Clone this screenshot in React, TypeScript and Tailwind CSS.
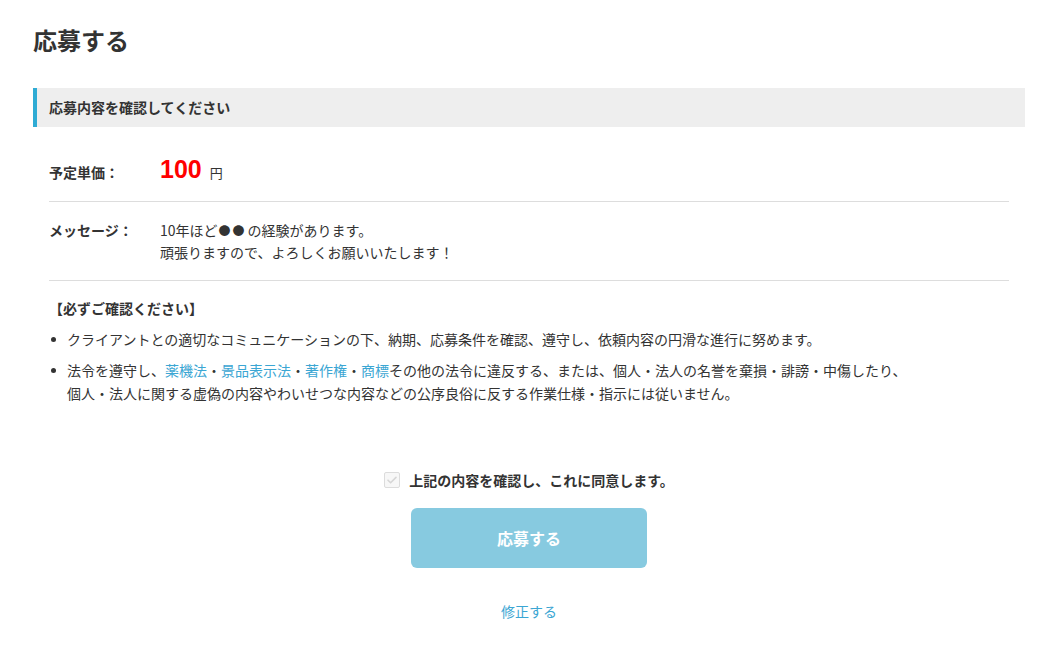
import React from 'react';

const font = { fontFamily: '"Noto Sans CJK JP", "Liberation Sans", sans-serif' };
const numFont = { fontFamily: '"Liberation Sans", Arial, sans-serif' };

const Link = ({ children }: { children: React.ReactNode }) => (
  <a href="#" className="text-[#3ba6d3]">{children}</a>
);

const Bullet = () => (
  <span className="w-[18px] shrink-0 flex justify-start pl-[2px] pt-[9px]">
    <span className="w-[5px] h-[5px] rounded-full bg-[#333]" />
  </span>
);

export default function App() {
  return (
    <div className="bg-white text-[#333] min-h-[663px]" style={font}>
      <div className="ml-[33px] w-[992px] pt-[24px]">
        <h1 className="text-[24px] font-bold leading-[32px]">応募する</h1>

        {/* Section header */}
        <div className="mt-[32px] h-[39px] bg-[#eeeeee] border-l-4 border-[#2fabd4] flex items-center pl-3">
          <h2 className="text-[14px] font-bold">応募内容を確認してください</h2>
        </div>

        <div className="px-4">
          {/* Price */}
          <div className="mt-4 py-[17px] flex items-center border-b border-[#dddddd]">
            <div className="w-[111px] text-[14px] font-bold">予定単価：</div>
            <div className="flex items-baseline gap-[8px] h-6 leading-6">
              <span className="text-[25px] font-bold text-[#ff0000] -mt-[3px]" style={numFont}>100</span>
              <span className="text-[13px]">円</span>
            </div>
          </div>

          {/* Message */}
          <div className="py-[17px] flex border-b border-[#dddddd]">
            <div className="w-[111px] text-[14px] font-bold leading-[22px]">メッセージ：</div>
            <p className="text-[14px] leading-[22px]">
              10年ほど<span className="text-[12px] leading-none tracking-[2px] px-[1px]">●●</span>の経験があります。
              <br />
              頑張りますので、よろしくお願いいたします！
            </p>
          </div>

          {/* Notes */}
          <div className="pt-4">
            <p className="text-[14px] font-bold leading-[22px]">【必ずご確認ください】</p>
            <ul className="mt-[9px] flex flex-col gap-2 text-[14px] leading-[23px]">
              <li className="flex">
                <Bullet />
                <span>クライアントとの適切なコミュニケーションの下、納期、応募条件を確認、遵守し、依頼内容の円滑な進行に努めます。</span>
              </li>
              <li className="flex">
                <Bullet />
                <span>
                  法令を遵守し、<Link>薬機法</Link>・<Link>景品表示法</Link>・<Link>著作権</Link>・<Link>商標</Link>その他の法令に違反する、または、個人・法人の名誉を棄損・誹謗・中傷したり、
                  <br />
                  個人・法人に関する虚偽の内容やわいせつな内容などの公序良俗に反する作業仕様・指示には従いません。
                </span>
              </li>
            </ul>
          </div>
        </div>

        {/* Agreement */}
        <div className="mt-[63px] flex flex-col items-center">
          <label className="flex items-center gap-[9px] h-6">
            <span className="w-4 h-4 border border-[#dcdcdc] rounded-[2px] bg-[#f7f7f7] flex items-center justify-center">
              <svg width="12" height="12" viewBox="0 0 12 12" fill="none">
                <path d="M2 6.2l2.6 2.6L10 3.4" stroke="#d6d6d6" strokeWidth="1.6" strokeLinecap="round" strokeLinejoin="round" />
              </svg>
            </span>
            <span className="text-[14px] font-bold">上記の内容を確認し、これに同意します。</span>
          </label>

          <button className="mt-[16px] w-[236px] h-[60px] rounded-[6px] bg-[#87cae0] text-white text-[16px] font-bold">
            応募する
          </button>

          <a href="#" className="mt-[33px] text-[14px] text-[#3ba6d3] leading-5">修正する</a>
        </div>
      </div>
    </div>
  );
}
